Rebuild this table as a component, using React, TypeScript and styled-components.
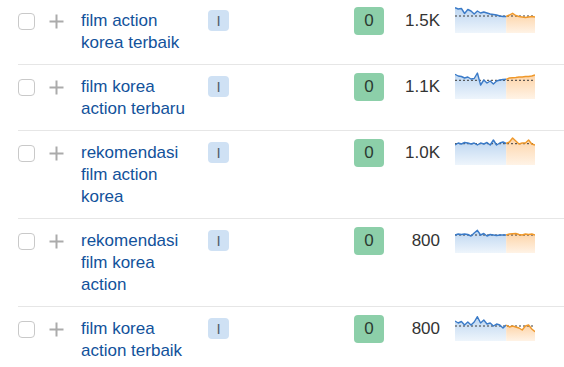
import React from "react";
import styled, { createGlobalStyle } from "styled-components";

const Global = createGlobalStyle`
  html, body { margin: 0; padding: 0; background: #ffffff; }
  body { font-family: "Liberation Sans", Arial, sans-serif; overflow: hidden; }
`;

const Table = styled.div`
  margin-top: -1px;
  display: flex;
  flex-direction: column;
`;

const Row = styled.div`
  margin-left: 18px;
  padding: 11px 0 10px;
  border-bottom: 1px solid #e6e6e6;
  display: grid;
  grid-template-columns: 31px 32px 127px 146px 30px 56px 95px;
  align-items: start;
`;

const Cell = styled.div`
  height: 22px;
  display: flex;
  align-items: center;
`;

const Checkbox = styled.span`
  width: 15px;
  height: 15px;
  border: 1px solid #c9c9c9;
  border-radius: 4px;
  background: #fff;
  box-sizing: content-box;
`;

const Keyword = styled.a`
  padding-right: 7px;
  font-size: 17px;
  line-height: 22px;
  color: #12529b;
  text-decoration: none;
`;

const IntentBadge = styled.span`
  width: 21px;
  height: 21px;
  border-radius: 4px;
  background: #cfe1f4;
  color: #55606b;
  font-size: 15px;
  display: flex;
  align-items: center;
  justify-content: center;
`;

const KdBadge = styled.span`
  margin-top: -3px;
  width: 30px;
  height: 28px;
  border-radius: 4px;
  background: #8ccfa9;
  color: #2a3a31;
  font-size: 17px;
  display: flex;
  align-items: center;
  justify-content: center;
`;

const Volume = styled.div`
  font-size: 17px;
  line-height: 22px;
  color: #333333;
  text-align: right;
`;

const Trend = styled.div`
  margin-top: -5px;
  padding-left: 15px;
  height: 28px;
`;

const Plus = () => (
  <svg width="15" height="15" viewBox="0 0 15 15">
    <path d="M7.5 0.5v14M0.5 7.5h14" stroke="#ababab" strokeWidth="2" fill="none" />
  </svg>
);

type SparkProps = { blue: number[]; orange: number[]; avg: number; id: string };

const W = 80;
const H = 28;

const Sparkline = ({ blue, orange, avg, id }: SparkProps) => {
  const all = [...blue, ...orange.slice(1)];
  const step = W / (all.length - 1);
  const pts = all.map((v, i) => [i * step, v] as [number, number]);
  const split = blue.length - 1;
  const bluePts = pts.slice(0, split + 1);
  const orangePts = pts.slice(split);
  const line = (p: [number, number][]) =>
    p.map(([x, y], i) => `${i ? "L" : "M"}${x.toFixed(2)} ${y}`).join(" ");
  const area = (p: [number, number][]) =>
    `${line(p)} L${p[p.length - 1][0].toFixed(2)} ${H} L${p[0][0].toFixed(2)} ${H} Z`;
  return (
    <svg width={W} height={H} viewBox={`0 0 ${W} ${H}`}>
      <defs>
        <linearGradient id={`b${id}`} x1="0" y1="0" x2="0" y2="1">
          <stop offset="0" stopColor="#bcd5f0" />
          <stop offset="1" stopColor="#eef5fc" />
        </linearGradient>
        <linearGradient id={`o${id}`} x1="0" y1="0" x2="0" y2="1">
          <stop offset="0" stopColor="#fdd4a8" />
          <stop offset="1" stopColor="#fff3e6" />
        </linearGradient>
      </defs>
      <path d={area(bluePts)} fill={`url(#b${id})`} />
      <path d={area(orangePts)} fill={`url(#o${id})`} />
      <line x1="0" y1={avg} x2={W} y2={avg} stroke="#3a3a3a" strokeWidth="1" strokeDasharray="2 2" />
      <path d={line(bluePts)} fill="none" stroke="#3b7bc8" strokeWidth="1.4" strokeLinejoin="round" />
      <path d={line(orangePts)} fill="none" stroke="#ef982a" strokeWidth="1.4" strokeLinejoin="round" />
    </svg>
  );
};

type Item = {
  kw: string;
  vol: string;
  blue: number[];
  orange: number[];
  avg: number;
};

const rows: Item[] = [
  {
    kw: "film action korea terbaik",
    vol: "1.5K",
    blue: [2.7, 4, 3.5, 8.5, 4.5, 6, 9, 6, 8, 7, 8, 9, 9.5, 10, 11, 11.5, 11.5],
    orange: [11.5, 10, 8.3, 10.5, 11.5, 12, 12.5, 12, 11.5, 12],
    avg: 11,
  },
  {
    kw: "film korea action terbaru",
    vol: "1.1K",
    blue: [3.3, 5, 5.5, 7, 6, 8, 7.5, 2, 14, 9, 12, 10, 13, 10, 9, 8.5, 8.3],
    orange: [8.3, 7, 6.7, 6.5, 6, 6, 5.5, 5.5, 5, 4],
    avg: 9.3,
  },
  {
    kw: "rekomendasi film action korea",
    vol: "1.0K",
    blue: [8, 6, 7, 5.5, 6, 7, 6, 8, 6, 7, 5.5, 8, 3, 8, 6, 5, 6.5],
    orange: [6.5, 5, 1, 4, 7, 6, 6, 3, 7, 8],
    avg: 6.7,
  },
  {
    kw: "rekomendasi film korea action",
    vol: "800",
    blue: [10, 9, 9.5, 9, 9.5, 11, 8, 5.3, 10, 8.5, 11, 9.5, 10, 10.5, 10, 10, 10],
    orange: [10, 9, 8.7, 8.5, 9.5, 10, 9, 9.5, 9, 10],
    avg: 10,
  },
  {
    kw: "film korea action terbaik",
    vol: "800",
    blue: [8, 10, 8.5, 12, 9, 12, 9, 3.7, 10, 7, 11, 10, 13, 11, 12, 15, 12],
    orange: [12, 14, 13, 14, 15, 17, 13, 12, 16, 18.7],
    avg: 13,
  },
];

export default function App() {
  return (
    <>
      <Global />
      <Table>
        {rows.map((r, i) => (
          <Row key={i}>
            <Cell>
              <Checkbox />
            </Cell>
            <Cell>
              <Plus />
            </Cell>
            <Keyword href="#">{r.kw}</Keyword>
            <div>
              <IntentBadge>I</IntentBadge>
            </div>
            <KdBadge>0</KdBadge>
            <Volume>{r.vol}</Volume>
            <Trend>
              <Sparkline blue={r.blue} orange={r.orange} avg={r.avg} id={String(i)} />
            </Trend>
          </Row>
        ))}
      </Table>
    </>
  );
}
